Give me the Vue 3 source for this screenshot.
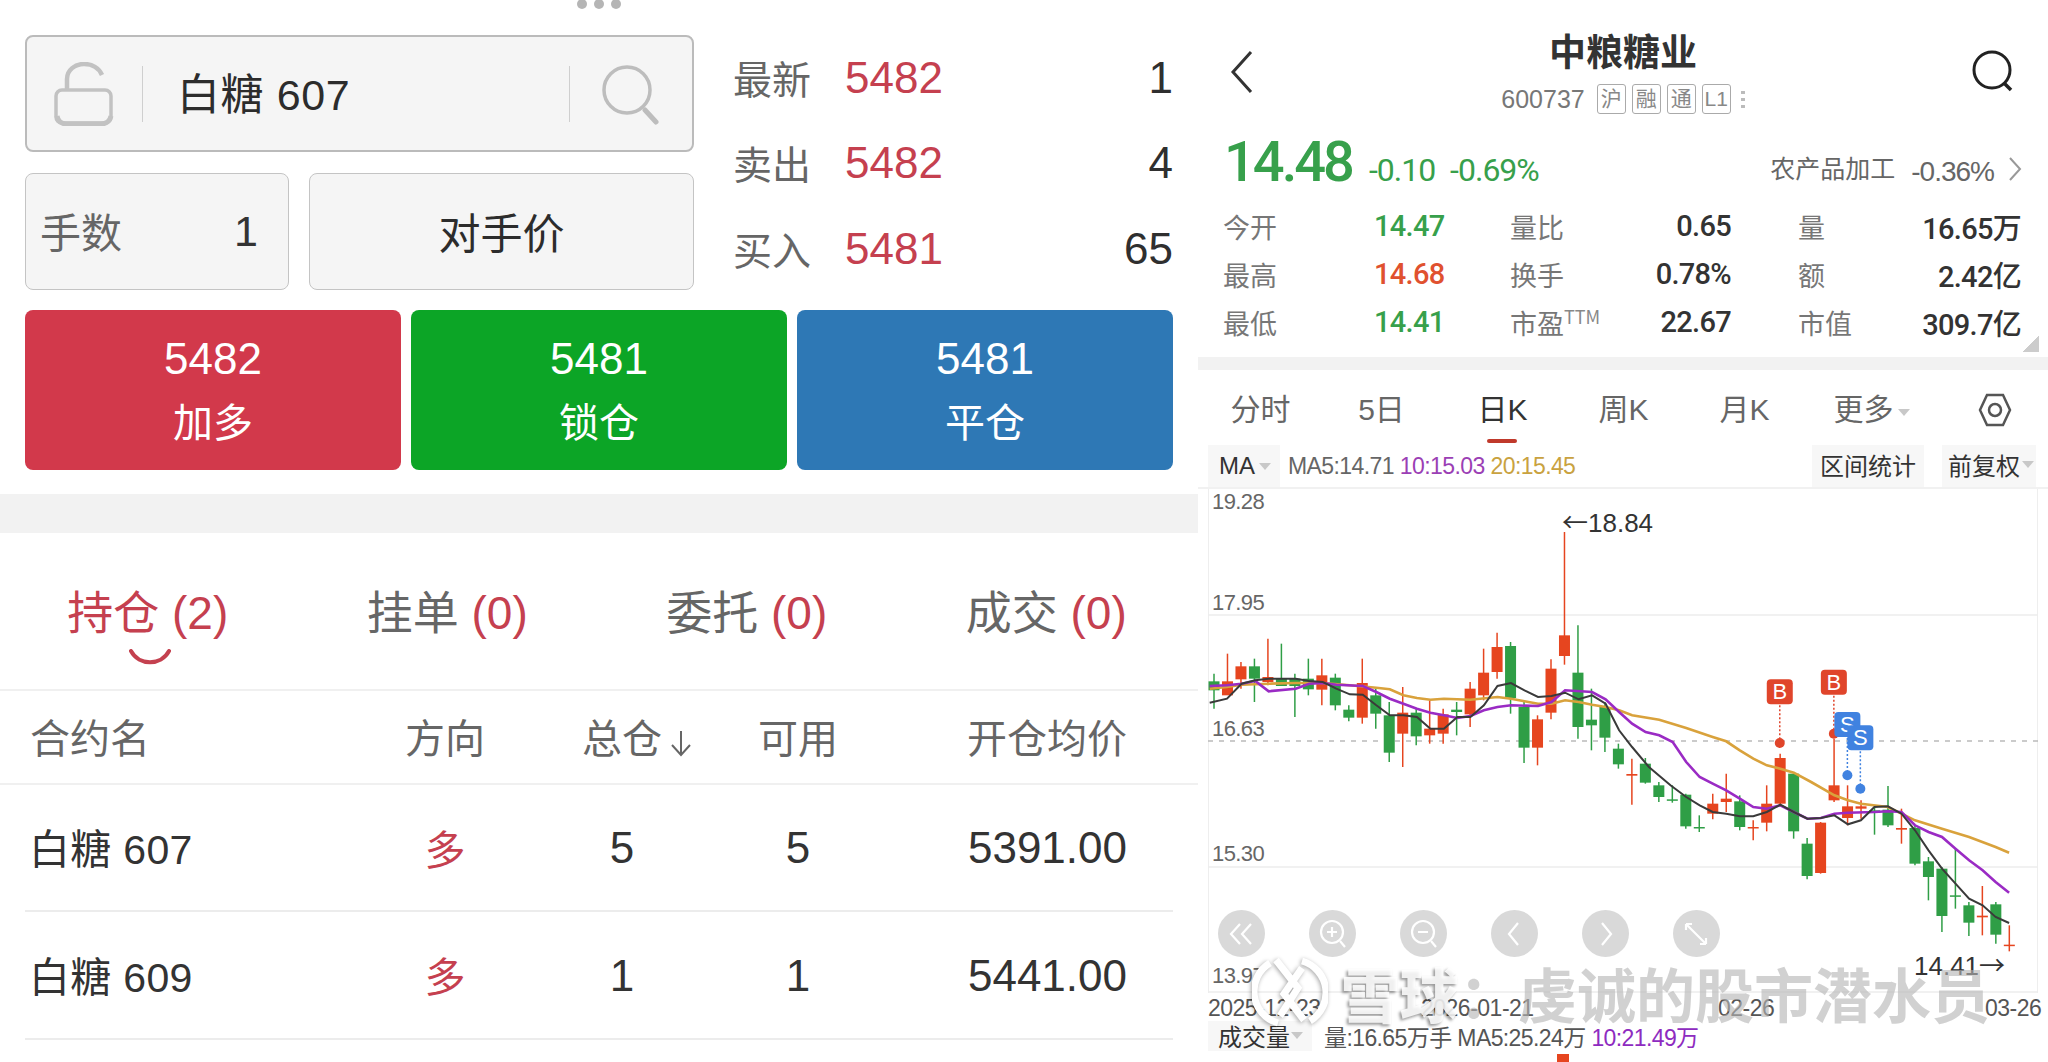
<script setup>
const quotes = [
  { label: '最新', price: 5482, qty: 1 },
  { label: '卖出', price: 5482, qty: 4 },
  { label: '买入', price: 5481, qty: 65 },
]
const actions = [
  { price: 5482, label: '加多', cls: 'red' },
  { price: 5481, label: '锁仓', cls: 'green' },
  { price: 5481, label: '平仓', cls: 'blue' },
]
const tabs = [
  { label: '持仓', n: 2, active: true },
  { label: '挂单', n: 0 },
  { label: '委托', n: 0 },
  { label: '成交', n: 0 },
]
const positions = [
  { name: '白糖 607', total: 5, free: 5, price: '5391.00' },
  { name: '白糖 609', total: 1, free: 1, price: '5441.00' },
]
const stats = [
  ['今开', '14.47', 'down', '量比', '0.65', '量', '16.65万'],
  ['最高', '14.68', 'up', '换手', '0.78%', '额', '2.42亿'],
  ['最低', '14.41', 'down', '市盈', '22.67', '市值', '309.7亿'],
]
const periods = ['分时', '5日', '日K', '周K', '月K']
const yLabels = [
  { text: '19.28', cls: 'y1' },
  { text: '17.95', cls: 'y2' },
  { text: '16.63', cls: 'y3' },
  { text: '15.30', cls: 'y4' },
  { text: '13.97', cls: 'y5' },
]

// chart values were read off the reference: u = 3 * (y - 480), zx = 1.849 * (x - 1200)
const py = (u) => 480 + u / 3
const px = (zx) => 1200 + zx / 1.849
const raw = [
  'g,575,680,598,625', 'r,515,625,598,640', 'r,540,620,553,592', 'g,530,660,553,590', 'r,470,610,585,600',
  'g,485,610,590,612', 'g,575,705,590,612', 'g,530,640,590,622', 'r,530,670,580,623', 'g,575,685,587,670',
  'g,670,718,683,707', 'r,530,725,603,707', 'g,620,740,640,695', 'g,660,840,700,812', 'r,615,855,692,755',
  'g,680,790,692,763', 'r,655,785,740,760', 'r,680,785,697,755', 'g,660,760,683,690', 'r,600,735,620,697',
  'r,500,655,572,640', 'r,452,590,495,570', 'g,480,695,492,648', 'g,660,843,675,797', 'r,700,850,712,797',
  'r,532,712,560,692', 'r,150,548,460,522', 'g,430,770,572,735', 'g,620,805,713,730', 'g,660,810,675,767',
  'g,785,860,800,847', 'r,830,968,876,881', 'g,828,905,845,902', 'g,900,960,910,945', 'g,910,962,952,956',
  'g,935,1040,938,1033', 'g,1000,1050,1035,1039', 'r,935,1012,965,995', 'r,875,990,950,960', 'g,940,1045,958,1035',
  'r,1015,1075,1035,1039', 'r,910,1048,965,1022', 'r,815,975,828,965', 'g,870,1070,875,1048', 'g,1068,1192,1085,1182',
  'r,1020,1175,1022,1173', 'r,770,960,910,955', 'r,910,1030,973,1008', 'r,955,1010,973,980', 'g,975,1058,985,990',
  'g,912,1035,983,1030', 'r,980,1085,1038,1043', 'g,1030,1150,1038,1145', 'g,1125,1255,1138,1185', 'g,1155,1350,1160,1302',
  'g,1098,1280,1240,1243', 'g,1260,1362,1270,1322', 'r,1212,1360,1301,1306', 'g,1260,1385,1267,1358', 'r,1330,1408,1388,1392',
]
const candles = raw.map((row, i) => {
  const [c, hi, lo, top, bot] = row.split(',')
  return {
    x: 1214 + 13.48 * i,
    color: c === 'r' ? '#e6451f' : '#2f9e46',
    hi: py(+hi),
    lo: py(+lo),
    top: py(+top),
    h: Math.max((+bot - +top) / 3, 1.5),
  }
})
const line = (s) =>
  s.split(' ').map((p) => {
    const [a, b] = p.split(',')
    return `${px(+a).toFixed(1)},${py(+b).toFixed(1)}`
  }).join(' ')
const ma5 = line('18,662 50,650 77,605 102,595 127,590 177,590 202,597 227,600 252,620 277,637 301,638 326,670 351,700 376,700 401,705 426,740 451,740 476,705 500,705 525,670 550,612 575,603 600,625 625,645 650,642 675,632 700,652 725,640 750,665 775,745 799,795 830,855 870,910 899,945 924,970 948,990 973,995 998,1003 1023,1003 1048,990 1073,968 1098,990 1123,1010 1148,1008 1173,1000 1198,1027 1222,1015 1247,975 1272,973 1297,995 1322,1045 1347,1105 1372,1160 1397,1205 1422,1250 1447,1270 1471,1305 1496,1323')
const ma10 = line('18,612 50,610 77,605 102,597 127,628 177,620 202,605 227,603 252,608 301,612 326,630 351,650 376,665 401,680 426,692 451,700 476,708 500,702 525,685 550,675 575,670 625,672 650,660 675,625 725,630 750,652 775,690 799,725 824,750 849,760 874,780 899,840 924,885 948,905 973,925 998,950 1023,975 1048,980 1073,970 1098,990 1123,1010 1148,1008 1173,995 1198,992 1247,990 1272,988 1297,990 1322,1030 1347,1050 1372,1065 1397,1100 1422,1135 1447,1165 1471,1200 1496,1232')
const ma20 = line('18,620 50,615 77,608 127,605 177,603 227,603 277,610 326,617 351,622 376,640 401,648 426,653 451,650 500,653 550,645 575,650 600,658 625,665 650,665 675,655 700,660 725,668 750,675 775,685 799,700 849,713 899,738 948,765 973,778 998,805 1023,830 1048,850 1073,860 1098,872 1130,900 1173,940 1198,955 1222,965 1272,975 1297,995 1322,1015 1372,1040 1422,1065 1471,1095 1496,1112')
const flags = [
  { x: 1072, top: 592, tip: 783, text: 'B', color: '#e0452b' },
  { x: 1172, top: 563, tip: 755, text: 'B', color: '#e0452b' },
  { x: 1197, top: 690, tip: 880, text: 'S', color: '#4082e0' },
  { x: 1221, top: 730, tip: 920, text: 'S', color: '#4082e0' },
].map((f) => ({ ...f, cx: px(f.x), y: py(f.top), cy: py(f.tip) }))
</script>

<template>
  <div class="page">
    <section class="trade">
      <div class="dots"><i></i><i></i><i></i></div>
      <div class="order">
        <div class="order-left">
          <div class="box symbol">
            <svg class="lock" width="60" height="64" viewBox="0 0 60 64" fill="none" stroke="#c2c2c2">
              <rect x="2" y="28" width="55" height="33" rx="6" stroke-width="3.5" />
              <path d="M3 54c1 5 5 8 9 8h35c5 0 9-3 10-8" stroke-width="5" />
              <path d="M13 27V17C13 8 21 2 30 2c8 0 15 4 18 11" stroke-width="4.5" />
            </svg>
            <span class="sep"></span>
            <span class="symbol-name">白糖 607</span>
            <span class="sep"></span>
            <svg class="lens" width="62" height="62" viewBox="0 0 62 62" fill="none" stroke="#bdbdbd">
              <circle cx="26" cy="27" r="23" stroke-width="3.5" />
              <path d="M44 47l11 12" stroke-width="5" stroke-linecap="round" />
            </svg>
          </div>
          <div class="order-row">
            <div class="box lots"><span class="lots-label">手数</span><span>1</span></div>
            <div class="box counter">对手价</div>
          </div>
        </div>
        <div class="quotes">
          <div v-for="q in quotes" :key="q.label" class="quote">
            <span class="quote-label">{{ q.label }}</span>
            <span class="quote-price">{{ q.price }}</span>
            <span class="quote-qty">{{ q.qty }}</span>
          </div>
        </div>
      </div>
      <div class="actions">
        <div v-for="a in actions" :key="a.label" class="action" :class="a.cls">
          <span class="action-price">{{ a.price }}</span>
          <span class="action-label">{{ a.label }}</span>
        </div>
      </div>
      <div class="band"></div>
      <div class="tabs">
        <div v-for="t in tabs" :key="t.label" class="tab" :class="{ active: t.active }">
          {{ t.label }} <em>({{ t.n }})</em>
          <svg v-if="t.active" class="tab-mark" width="42" height="16" viewBox="0 0 42 16" fill="none">
            <path d="M2 2c8 15 30 15 38 0" stroke="#c4414f" stroke-width="4" stroke-linecap="round" />
          </svg>
        </div>
      </div>
      <div class="grid head">
        <span>合约名</span>
        <span class="c">方向</span>
        <span class="c"><span class="sort">总仓<svg width="28" height="28" viewBox="0 0 28 28" fill="none" stroke="#666" stroke-width="2"><path d="M14 2v23M5 16l9 10 9-10" /></svg></span></span>
        <span class="c">可用</span>
        <span class="r">开仓均价</span>
      </div>
      <div v-for="p in positions" :key="p.name" class="grid row">
        <span class="row-name">{{ p.name }}</span>
        <span class="c dir">多</span>
        <span class="c">{{ p.total }}</span>
        <span class="c">{{ p.free }}</span>
        <span class="r">{{ p.price }}</span>
      </div>
    </section>

    <section class="stock">
      <header class="stock-head">
        <svg class="back" width="24" height="44" viewBox="0 0 24 44" fill="none">
          <path d="M21 2L3 22l18 20" stroke="#333" stroke-width="3" />
        </svg>
        <div class="stock-title">
          <h1>中粮糖业</h1>
          <div class="stock-code">
            <span>600737</span>
            <b class="tags"><i>沪</i><i>融</i><i>通</i><i>L1</i></b>
            <b class="more"></b>
          </div>
        </div>
        <svg class="find" width="44" height="44" viewBox="0 0 44 44" fill="none" stroke="#222">
          <circle cx="21" cy="20" r="18" stroke-width="3" />
          <path d="M33 33l7 7" stroke-width="3.5" />
        </svg>
      </header>
      <div class="price-row">
        <span class="price">14.48</span>
        <span class="change">-0.10</span>
        <span class="change">-0.69%</span>
        <span class="sector">农产品加工</span>
        <span class="sector-val">-0.36%</span>
        <svg width="14" height="26" viewBox="0 0 14 26" fill="none"><path d="M2 2l10 11L2 24" stroke="#999" stroke-width="2" /></svg>
      </div>
      <div class="stats">
        <div v-for="s in stats" :key="s[0]" class="stat-row">
          <span class="stat-a">{{ s[0] }}</span>
          <span class="stat-b" :class="s[2]">{{ s[1] }}</span>
          <span class="stat-c">{{ s[3] }}<sup v-if="s[3] === '市盈'">TTM</sup></span>
          <span class="stat-d">{{ s[4] }}</span>
          <span class="stat-e">{{ s[5] }}</span>
          <span class="stat-f">{{ s[6] }}</span>
        </div>
        <i class="corner"></i>
      </div>
      <div class="band small"></div>
      <nav class="periods">
        <span v-for="p in periods" :key="p" class="period" :class="{ on: p === '日K' }">{{ p }}</span>
        <span class="period">更多<i class="caret"></i></span>
        <svg class="hex" width="34" height="36" viewBox="0 0 34 36" fill="none" stroke="#555" stroke-width="2.5">
          <path d="M9 3h16l7 15-7 15H9L2 18z" />
          <circle cx="17" cy="18" r="6" />
        </svg>
      </nav>
      <div class="ma-row">
        <span class="chip ma">MA<i class="caret"></i></span>
        <span class="ma-val">MA5:14.71</span>
        <span class="ma-val purple">10:15.03</span>
        <span class="ma-val gold">20:15.45</span>
        <span class="chip stat-range">区间统计</span>
        <span class="chip adjust">前复权<i class="caret"></i></span>
      </div>
      <div class="chart">
        <svg class="plot" width="830" height="504" viewBox="1208 487 830 504">
          <line x1="1208" x2="2038" y1="613" y2="613" stroke="#ececec" stroke-width="1.5" />
          <line x1="1208" x2="2038" y1="739" y2="739" stroke="#bbb" stroke-width="1.5" stroke-dasharray="5 6" />
          <line x1="1208" x2="2038" y1="865" y2="865" stroke="#ececec" stroke-width="1.5" />
          <line x1="1208" x2="2038" y1="990" y2="990" stroke="#ececec" stroke-width="1.5" />
          <g v-for="(c, i) in candles" :key="i">
            <line :x1="c.x" :x2="c.x" :y1="c.hi" :y2="c.lo" :stroke="c.color" stroke-width="1.5" />
            <rect :x="c.x - 5.5" :y="c.top" width="11" :height="c.h" :fill="c.color" />
          </g>
          <polyline :points="ma20" fill="none" stroke="#d9a23c" stroke-width="2.6" />
          <polyline :points="ma10" fill="none" stroke="#9a2bc4" stroke-width="2.6" />
          <polyline :points="ma5" fill="none" stroke="#3a3a3a" stroke-width="2" />
          <g v-for="f in flags" :key="f.x">
            <line :x1="f.cx" :x2="f.cx" :y1="f.y + 22" :y2="f.cy" :stroke="f.color" stroke-width="1.5" stroke-dasharray="2 2" />
            <circle :cx="f.cx" :cy="f.cy" r="5" :fill="f.color" />
            <rect :x="f.cx - 13" :y="f.y" width="26" height="25" rx="4" :fill="f.color" />
            <text :x="f.cx" :y="f.y + 20" class="flag-text" text-anchor="middle">{{ f.text }}</text>
          </g>
        </svg>
        <span v-for="l in yLabels" :key="l.text" class="y-label" :class="l.cls">{{ l.text }}</span>
        <span class="mark high"><i>←</i>18.84</span>
        <span class="mark low">14.41<i>→</i></span>
        <div class="nav">
          <svg viewBox="0 0 47 47" fill="none" stroke="#fff" stroke-width="2.2"><circle cx="23.5" cy="23.5" r="23.5" fill="#d9d9d9" stroke="none" /><path d="M22 14l-9 10 9 10M33 14l-9 10 9 10" /></svg>
          <svg viewBox="0 0 47 47" fill="none" stroke="#fff" stroke-width="2.2"><circle cx="23.5" cy="23.5" r="23.5" fill="#d9d9d9" stroke="none" /><circle cx="23" cy="22" r="11" /><path d="M18 22h10M23 17v10M31 31l5 6" /></svg>
          <svg viewBox="0 0 47 47" fill="none" stroke="#fff" stroke-width="2.2"><circle cx="23.5" cy="23.5" r="23.5" fill="#d9d9d9" stroke="none" /><circle cx="23" cy="22" r="11" /><path d="M18 22h10M31 31l5 6" /></svg>
          <svg viewBox="0 0 47 47" fill="none" stroke="#fff" stroke-width="2.2"><circle cx="23.5" cy="23.5" r="23.5" fill="#d9d9d9" stroke="none" /><path d="M27 13l-9 11 9 11" /></svg>
          <svg viewBox="0 0 47 47" fill="none" stroke="#fff" stroke-width="2.2"><circle cx="23.5" cy="23.5" r="23.5" fill="#d9d9d9" stroke="none" /><path d="M20 13l9 11-9 11" /></svg>
          <svg viewBox="0 0 47 47" fill="none" stroke="#fff" stroke-width="2.2"><circle cx="23.5" cy="23.5" r="23.5" fill="#d9d9d9" stroke="none" /><path d="M13 14l20 20M13 14h6M13 14v6M33 34h-6M33 34v-6" /></svg>
        </div>
      </div>
      <div class="dates">
        <span>2025-12-23</span><span>2026-01-21</span><span>02-26</span><span>03-26</span>
      </div>
      <div class="vol-row">
        <span class="chip vol">成交量<i class="caret"></i></span>
        <span class="vol-text">量:16.65万手 MA5:25.24万 <em>10:21.49万</em></span>
      </div>
      <i class="vol-bar"></i>
    </section>

    <div class="watermark">
      <svg width="76" height="84" viewBox="0 0 76 84" fill="none" stroke="#fff" stroke-width="7">
        <path d="M50 11a33 33 0 0 1 8 60M26 73a33 33 0 0 1-8-60" />
        <path d="M24 10l22 28-18 28M50 18L32 44l20 26" />
      </svg>
      <span class="wm-text"><b>雪球</b>：虔诚的股市潜水员</span>
    </div>
  </div>
</template>

<style scoped>
.page {
  position: relative;
  display: flex;
  width: 2048px;
  height: 1062px;
  overflow: hidden;
  background: #fff;
  color: #333;
  font-family: "Liberation Sans", "Noto Sans CJK SC", sans-serif;
}
.trade {
  width: 1198px;
  flex: none;
}
.dots {
  display: flex;
  justify-content: center;
  gap: 7px;
  height: 36px;
  margin-top: -1px;
}
.dots i {
  width: 10px;
  height: 10px;
  border-radius: 50%;
  background: #b5b5b5;
}
.order {
  display: flex;
  gap: 39px;
  padding: 0 25px;
}
.order-left {
  width: 669px;
  flex: none;
}
.box {
  display: flex;
  align-items: center;
  background: #f5f5f5;
  border: 1px solid #c4c4c4;
  border-radius: 8px;
  box-sizing: border-box;
}
.symbol {
  height: 117px;
  border: 2px solid #bbb;
  padding: 0 29px 0 27px;
}
.sep {
  width: 1px;
  height: 56px;
  background: #cfcfcf;
}
.lock {
  margin-right: 28px;
}
.symbol-name {
  flex: 1;
  padding: 0 0 5px 34px;
  font-size: 43px;
  letter-spacing: .6px;
  color: #2c2c2c;
}
.lens {
  margin-left: 31px;
}
.order-row {
  display: flex;
  gap: 20px;
  margin-top: 21px;
}
.lots {
  width: 264px;
  height: 117px;
  justify-content: space-between;
  padding: 0 30px 0 14px;
  font-size: 43px;
}
.lots-label {
  font-size: 41px;
  color: #666;
  padding-bottom: 3px;
}
.counter {
  flex: 1;
  height: 117px;
  justify-content: center;
  padding-bottom: 3px;
  font-size: 42px;
  color: #2c2c2c;
}
.quotes {
  flex: 1;
  display: flex;
  flex-direction: column;
}
.quote {
  display: flex;
  align-items: center;
  height: 85.5px;
  font-size: 44px;
}
.quote-label {
  width: 112px;
  font-size: 39px;
  color: #666;
  padding-bottom: 2px;
}
.quote-price {
  color: #c5404f;
}
.quote-qty {
  margin-left: auto;
  color: #2f2f2f;
}
.actions {
  display: flex;
  gap: 10px;
  padding: 18px 25px 0;
}
.action {
  flex: 1;
  height: 160px;
  border-radius: 8px;
  color: #fff;
  display: flex;
  flex-direction: column;
  align-items: center;
  padding-top: 24px;
  box-sizing: border-box;
}
.action.red { background: #d2394b; }
.action.green { background: #0ca526; }
.action.blue { background: #2e78b5; }
.action-price {
  font-size: 44px;
  line-height: 50px;
}
.action-label {
  font-size: 40px;
  line-height: 60px;
  margin-top: 9px;
}
.band {
  height: 39px;
  margin-top: 24px;
  background: #f2f2f2;
}
.band.small {
  height: 13px;
  margin-top: 0;
}
.tabs {
  display: grid;
  grid-template-columns: repeat(4, 1fr);
  height: 158px;
  border-bottom: 2px solid #f0f0f0;
  box-sizing: border-box;
}
.tab {
  position: relative;
  text-align: center;
  font-size: 46px;
  line-height: 160px;
  color: #666;
  padding-right: 4px;
}
.tab em {
  font-style: normal;
  color: #c5404f;
}
.tab.active {
  color: #c5404f;
}
.tab-mark {
  position: absolute;
  left: 129px;
  top: 116px;
}
.grid {
  display: grid;
  grid-template-columns: 322px 186px 168px 184px 1fr;
  align-items: center;
  padding-left: 30px;
}
.grid .c {
  text-align: center;
}
.grid .r {
  text-align: right;
  padding-right: 71px;
}
.sort {
  position: relative;
}
.sort svg {
  position: absolute;
  left: calc(100% + 5px);
  top: 12px;
}
.head {
  height: 94px;
  padding-bottom: 2px;
  box-sizing: border-box;
  font-size: 40px;
  color: #666;
  border-bottom: 2px solid #f0f0f0;
}
.row {
  position: relative;
  height: 127.5px;
  box-sizing: border-box;
  font-size: 44px;
  color: #333;
}
.row::after {
  content: "";
  position: absolute;
  left: 25px;
  right: 25px;
  bottom: 0;
  height: 2px;
  background: #ececec;
}
.row-name {
  margin-left: -1px;
  padding-bottom: 4px;
  font-size: 41px;
  letter-spacing: .3px;
}
.dir {
  color: #c5404f;
  font-size: 41px;
  padding-bottom: 3px;
}

.stock {
  position: relative;
  flex: 1;
  min-width: 0;
}
.stock-head {
  display: flex;
  justify-content: space-between;
  padding: 50px 33px 0 32px;
  height: 129px;
  box-sizing: border-box;
}
.stock-title {
  position: absolute;
  left: 0;
  right: 0;
  top: 31px;
  text-align: center;
}
.stock-title h1 {
  margin: 0;
  font-size: 37px;
  font-weight: 700;
  line-height: 46px;
  color: #333;
}
.stock-code {
  display: flex;
  justify-content: center;
  align-items: center;
  gap: 12px;
  height: 36px;
  margin-top: 4px;
  font-size: 25px;
  color: #777;
}
.tags {
  display: flex;
  gap: 6px;
  font-weight: 400;
}
.tags i {
  width: 27px;
  height: 28px;
  border: 1px solid #aaa;
  border-radius: 3px;
  font-style: normal;
  font-size: 21px;
  line-height: 27px;
  text-align: center;
  color: #888;
}
.more {
  width: 4px;
  height: 20px;
  background: radial-gradient(circle, #bbb 1.8px, transparent 2px) 0 0 / 4px 7px;
  margin-left: -2px;
}
.price-row {
  display: flex;
  align-items: baseline;
  height: 69px;
  padding: 0 26px 0 26px;
  box-sizing: border-box;
}
.price {
  font-family: Roboto, "Liberation Sans", sans-serif;
  font-size: 56px;
  font-weight: 500;
  color: #37a04b;
  letter-spacing: -3px;
  margin-right: 17px;
}
.change {
  font-family: Roboto, "Liberation Sans", sans-serif;
  font-size: 32px;
  color: #37a04b;
  letter-spacing: -1px;
  margin-right: 15px;
}
.sector {
  position: relative;
  top: -3px;
  margin-left: auto;
  font-size: 25px;
  color: #666;
}
.sector-val {
  margin: 0 14px 0 16px;
  font-size: 28px;
  letter-spacing: -1px;
  color: #666;
}
.price-row svg {
  align-self: center;
  margin-top: 11px;
}
.stats {
  position: relative;
  height: 159px;
  padding: 4px 27px 0 25px;
  box-sizing: border-box;
}
.stat-row {
  display: grid;
  grid-template-columns: 151px 136px 120px 101px 1fr auto;
  align-items: center;
  height: 48px;
  font-family: Roboto, "Liberation Sans", "Noto Sans CJK SC", sans-serif;
  font-size: 29px;
  letter-spacing: -.7px;
}
.stat-a, .stat-c, .stat-e {
  font-family: "Noto Sans CJK SC", sans-serif;
  font-size: 27px;
  color: #777;
  letter-spacing: 0;
}
.stat-e {
  padding-left: 67px;
}
.stat-b {
  font-weight: 500;
}
.stat-b.up { color: #e0512f; }
.stat-b.down { color: #37a04b; }
.stat-c {
  white-space: nowrap;
}
.stat-c sup {
  font-size: 18px;
  line-height: 0;
  color: #888;
}
.stat-d, .stat-f {
  text-align: right;
  font-weight: 500;
  color: #333;
  white-space: nowrap;
}
.corner {
  position: absolute;
  right: 9px;
  bottom: 5px;
  width: 16px;
  height: 16px;
  background: linear-gradient(135deg, transparent 50%, #ccc 50%);
}
.periods {
  display: flex;
  align-items: center;
  height: 75px;
  padding: 4px 0 0 2px;
  box-sizing: border-box;
  font-size: 30px;
  color: #666;
}
.period {
  position: relative;
  width: 121px;
  flex: none;
  text-align: center;
  line-height: 71px;
}
.period:nth-child(6) {
  padding-left: 12px;
  box-sizing: border-box;
}
.period.on {
  color: #333;
}
.period.on::after {
  content: "";
  position: absolute;
  left: 45px;
  bottom: 2px;
  width: 30px;
  height: 4px;
  border-radius: 2px;
  background: #c0392b;
}
.hex {
  margin-left: 52px;
}
.caret {
  display: inline-block;
  width: 0;
  height: 0;
  margin-left: 4px;
  vertical-align: middle;
  border: 6px solid transparent;
  border-top: 7px solid #c8c8c8;
  border-bottom: 0;
}
.ma-row {
  display: flex;
  align-items: center;
  gap: 6px;
  height: 42px;
  padding: 0 12px 0 10px;
  border-bottom: 2px solid #f1f1f1;
  font-size: 23px;
  letter-spacing: -.6px;
}
.chip {
  display: flex;
  align-items: center;
  height: 100%;
  padding: 0 8px;
  background: #f7f7f7;
  color: #333;
  letter-spacing: 0;
}
.ma {
  width: 72px;
  box-sizing: border-box;
  padding-left: 11px;
  font-size: 24px;
  margin-right: 2px;
}
.ma-val {
  color: #666;
}
.purple { color: #9b3fb5; }
.gold { color: #c9a23f; }
.stat-range {
  margin-left: auto;
  margin-right: 12px;
  padding-bottom: 3px;
  height: 39px;
  font-size: 24px;
}
.adjust {
  height: 39px;
  padding: 0 2px 3px 6px;
  font-size: 24px;
}
.adjust .caret {
  margin-left: 2px;
}
.chart {
  position: relative;
  height: 504px;
  margin: 0 10px;
  border-left: 1px solid #eee;
  border-right: 1px solid #eee;
}
.plot {
  display: block;
  margin-left: -1px;
}
.flag-text {
  fill: #fff;
  font-size: 22px;
  font-family: "Liberation Sans", sans-serif;
}
.y-label {
  position: absolute;
  left: 3px;
  font-size: 22px;
  letter-spacing: -.6px;
  line-height: 26px;
  color: #666;
}
.y1 { top: 0; }
.y2 { top: 101px; }
.y3 { top: 227px; }
.y4 { top: 352px; }
.y5 { top: 474px; }
.mark {
  position: absolute;
  font-size: 26px;
  line-height: 30px;
  color: #333;
}
.mark i {
  font-family: "Noto Sans CJK SC", sans-serif;
  font-style: normal;
}
.high { left: 353px; top: 17px; }
.low { left: 705px; top: 460px; }
.nav {
  position: absolute;
  left: 9px;
  top: 421px;
  display: flex;
  gap: 44px;
}
.nav svg {
  width: 47px;
  height: 47px;
}
.dates {
  display: grid;
  grid-template-columns: 213px 297px 267px auto;
  height: 29px;
  padding-left: 10px;
  font-size: 23px;
  line-height: 30px;
  color: #555;
  letter-spacing: -.5px;
}
.vol-row {
  display: flex;
  align-items: center;
  gap: 12px;
  height: 27px;
  padding-left: 10px;
  font-size: 23px;
  letter-spacing: -.6px;
}
.vol {
  width: 104px;
  height: 30px;
  box-sizing: border-box;
  padding: 0 0 0 10px;
  font-size: 24px;
  flex: none;
  white-space: nowrap;
}
.vol .caret {
  margin-left: 1px;
}
.vol-text {
  color: #555;
  white-space: nowrap;
}
.vol-text em {
  font-style: normal;
  color: #8e2bc0;
}
.vol-bar {
  position: absolute;
  left: 359px;
  top: 1054px;
  width: 12px;
  height: 8px;
  background: #e6451f;
}
.watermark {
  position: absolute;
  left: 1252px;
  top: 950px;
  display: flex;
  align-items: flex-start;
  gap: 13px;
  pointer-events: none;
}
.watermark svg {
  filter: drop-shadow(-1px 1px 2px rgba(0, 0, 0, .35));
}
.wm-text {
  padding-top: 12px;
  font-size: 59px;
  font-weight: 700;
  line-height: 72px;
  color: rgba(180, 180, 180, .62);
  white-space: nowrap;
}
.wm-text b {
  color: rgba(255, 255, 255, .85);
  text-shadow: -2px 2px 3px rgba(0, 0, 0, .4);
}
</style>
